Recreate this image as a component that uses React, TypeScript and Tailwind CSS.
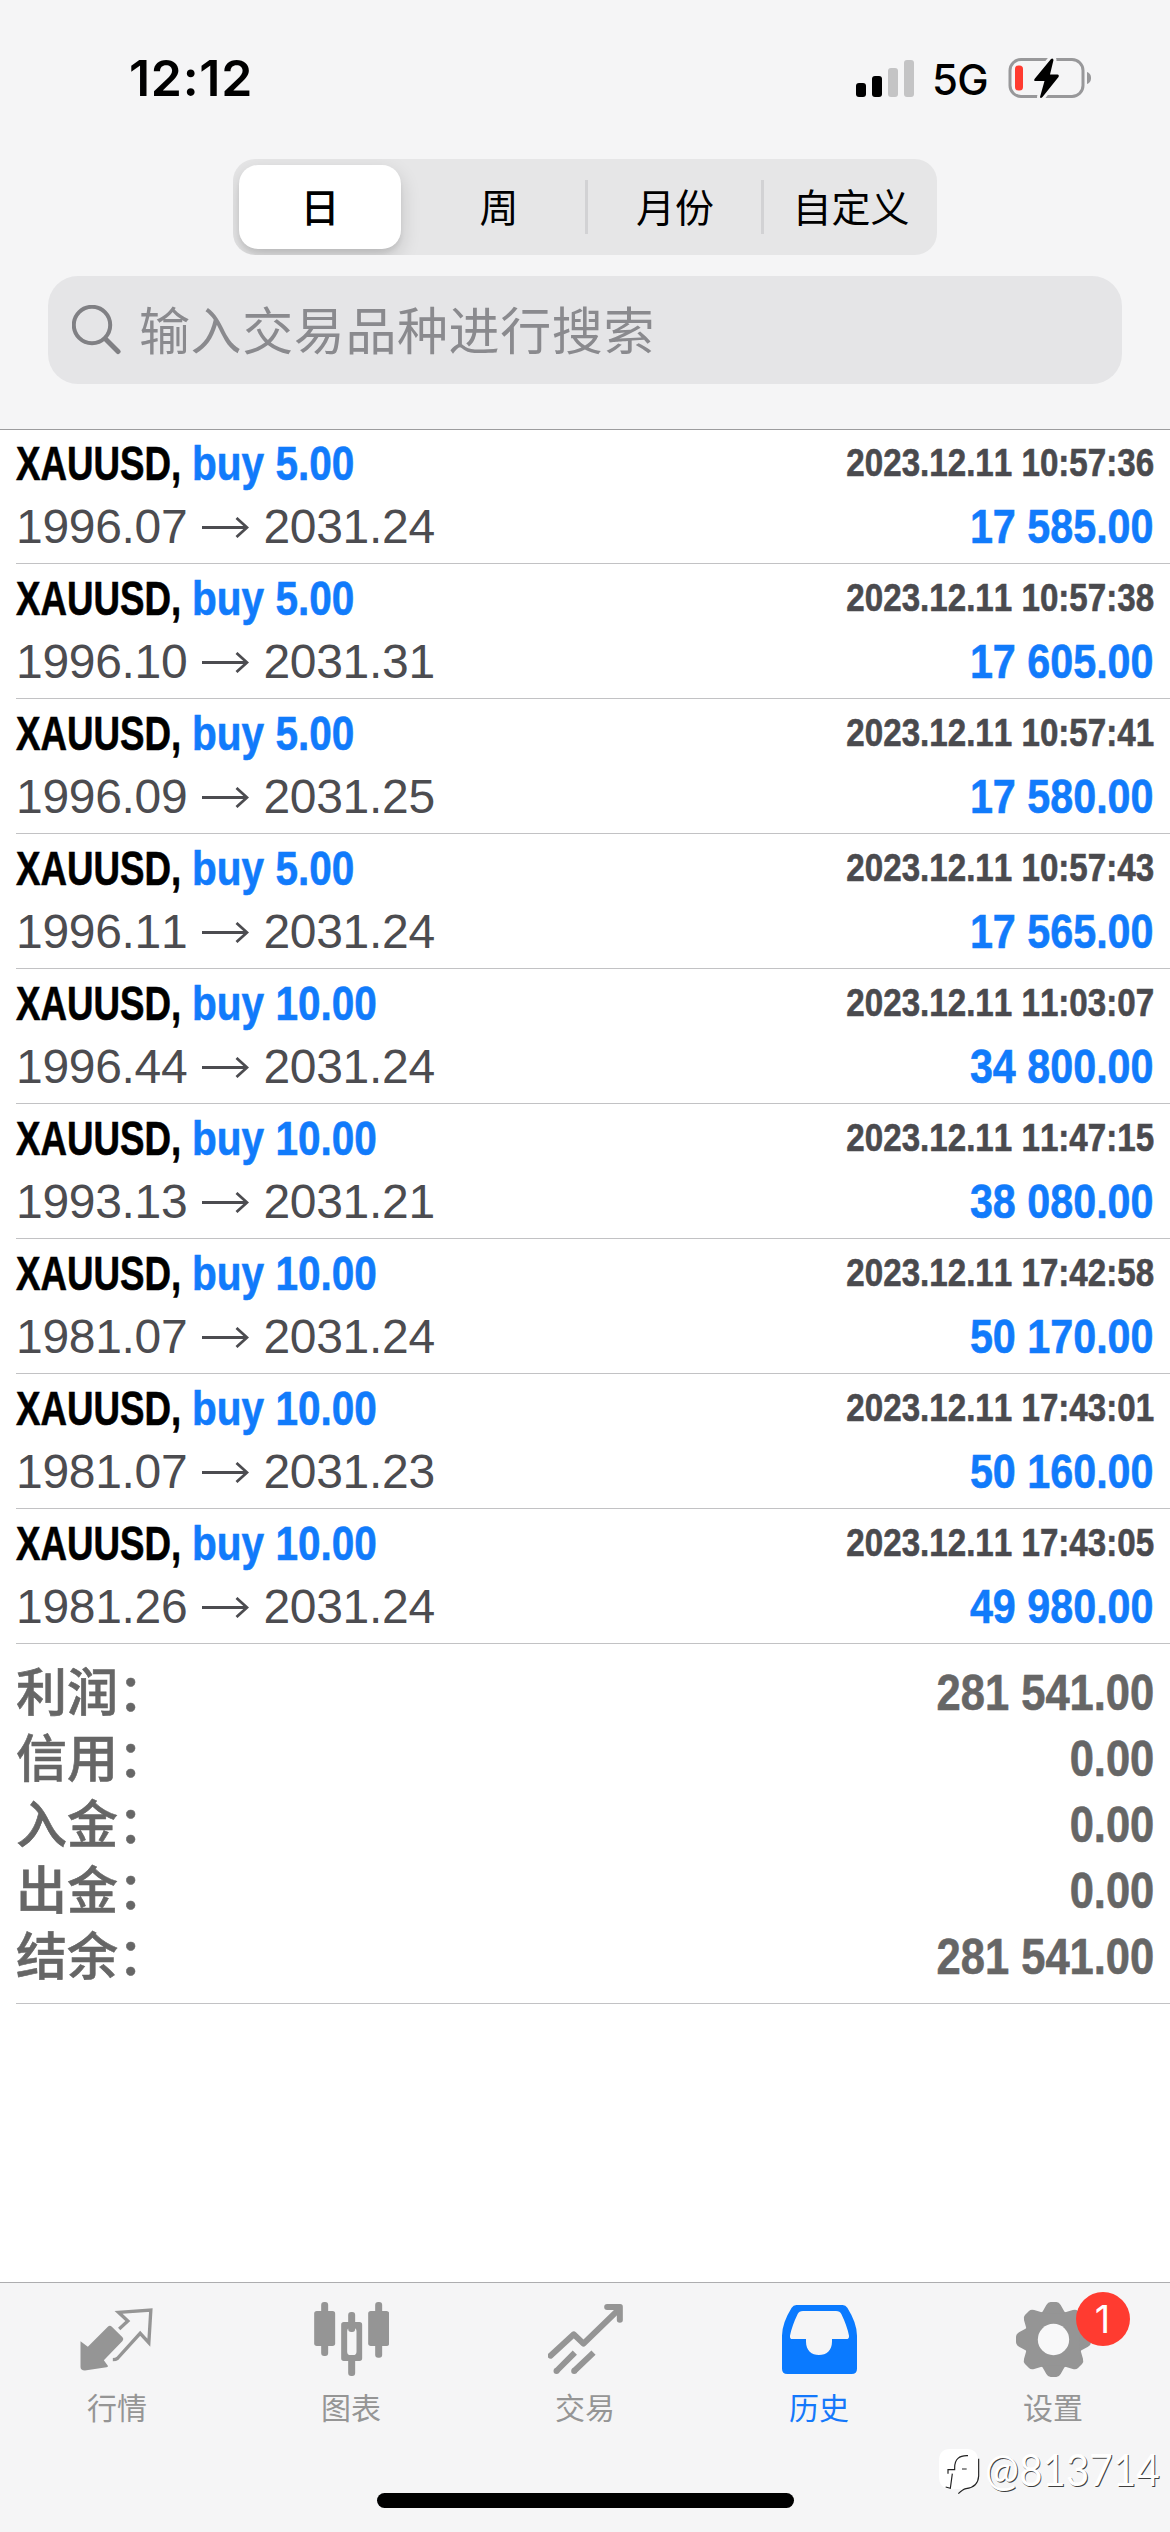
import type { ReactNode } from "react";
import clsx from "clsx";

type Deal = {
  volume: string;
  open: string;
  close: string;
  time: string;
  profit: string;
};

const PERIODS = ["日", "周", "月份", "自定义"];

const DEALS: Deal[] = [
  { volume: "5.00", open: "1996.07", close: "2031.24", time: "2023.12.11 10:57:36", profit: "17 585.00" },
  { volume: "5.00", open: "1996.10", close: "2031.31", time: "2023.12.11 10:57:38", profit: "17 605.00" },
  { volume: "5.00", open: "1996.09", close: "2031.25", time: "2023.12.11 10:57:41", profit: "17 580.00" },
  { volume: "5.00", open: "1996.11", close: "2031.24", time: "2023.12.11 10:57:43", profit: "17 565.00" },
  { volume: "10.00", open: "1996.44", close: "2031.24", time: "2023.12.11 11:03:07", profit: "34 800.00" },
  { volume: "10.00", open: "1993.13", close: "2031.21", time: "2023.12.11 11:47:15", profit: "38 080.00" },
  { volume: "10.00", open: "1981.07", close: "2031.24", time: "2023.12.11 17:42:58", profit: "50 170.00" },
  { volume: "10.00", open: "1981.07", close: "2031.23", time: "2023.12.11 17:43:01", profit: "50 160.00" },
  { volume: "10.00", open: "1981.26", close: "2031.24", time: "2023.12.11 17:43:05", profit: "49 980.00" },
];

const TOTALS = [
  { label: "利润：", value: "281 541.00" },
  { label: "信用：", value: "0.00" },
  { label: "入金：", value: "0.00" },
  { label: "出金：", value: "0.00" },
  { label: "结余：", value: "281 541.00" },
];

function StatusBar() {
  return (
    <div className="flex h-[156px] items-center justify-between pl-[129px] pr-[78px]">
      <span className="font-['Inter',sans-serif] text-[50px] font-semibold tracking-[0.7px] text-black">
        12:12
      </span>
      <div className="flex items-center">
        <svg width="58" height="37" viewBox="0 0 58 37">
          <rect x="0" y="23" width="10" height="14" rx="3" fill="#000" />
          <rect x="16" y="16" width="10" height="21" rx="3" fill="#000" />
          <rect x="32" y="8" width="10" height="29" rx="3" fill="#c4c4c5" />
          <rect x="48" y="0" width="10" height="37" rx="3" fill="#c4c4c5" />
        </svg>
        <span className="ml-[18px] w-[60px] pt-0.5 font-['Inter',sans-serif] text-[42px] font-medium tracking-[-0.8px] text-black">
          5G
        </span>
        <svg className="ml-[16px]" width="84" height="42" viewBox="0 0 84 42">
          <rect x="2" y="2.5" width="73" height="37" rx="11" fill="none" stroke="#98989a" strokeWidth="3" />
          <path d="M79 15c3.5 1.200 4 4 4 6s-.5 4.800-4 6z" fill="#98989a" />
          <rect x="7" y="8.500" width="8" height="25" rx="3.500" fill="#ff3b30" />
          <path
            d="M43 2 26.500 22q-1 2 1 2h9l-4.500 16q.5 2 2.500 0L50.500 20q1-2-1-2.500h-7.500L45.500 3q-.5-2.500-2.500-1z"
            fill="#000"
            stroke="#f5f5f6"
            strokeWidth="6"
            strokeLinejoin="round"
            paintOrder="stroke"
          />
        </svg>
      </div>
    </div>
  );
}

function PeriodControl({ active }: { active: number }) {
  return (
    <div className="mx-auto mt-[3px] flex h-24 w-[704px] overflow-hidden rounded-[22px] bg-[#e6e6e7]">
      {PERIODS.map((label, i) => (
        <div key={label} className="flex w-44 items-center">
          <div className={clsx("h-[54px] w-[3px]", i > active + 1 && "bg-[#d2d2d4]")} />
          <div
            className={clsx(
              "flex h-[84px] w-[162px] items-center justify-center rounded-[19px] pb-1 text-[39px] text-black",
              i === active
                ? "ml-[3px] bg-white font-medium shadow-[0_8px_20px_rgba(0,0,0,0.16),0_4px_4px_rgba(0,0,0,0.06)]"
                : "ml-[6px]",
            )}
          >
            {label}
          </div>
        </div>
      ))}
    </div>
  );
}

function SearchField() {
  return (
    <div className="mx-12 mt-[21px] flex h-[108px] items-center rounded-[30px] bg-[#e5e5e7] pl-6 text-[#8a8a8e]">
      <svg width="50" height="50" viewBox="0 0 50 50" fill="none" stroke="#808084" strokeLinecap="round">
        <circle cx="20" cy="20" r="18.200" strokeWidth="4" />
        <path d="M33.500 34 46 46.500" strokeWidth="5" />
      </svg>
      <span className="ml-[17px] pb-1 text-[51px] tracking-[0.6px]">输入交易品种进行搜索</span>
    </div>
  );
}

function Arrow() {
  return (
    <svg
      className="ml-[15px] mr-[14px] mt-[2px]"
      width="47"
      height="21"
      viewBox="0 0 47 21"
      fill="none"
      stroke="#4c4c50"
      strokeWidth="2.800"
    >
      <path d="M0 10.500h44M34.500 1l10.500 9.500L34.500 20" />
    </svg>
  );
}

// Condensed bold face: the glyphs are squeezed horizontally around one edge.
function Condensed({ children, className }: { children: ReactNode; className: string }) {
  return (
    <span
      className={clsx(
        "inline-block whitespace-pre font-bold [-webkit-text-stroke:0.6px] [font-kerning:none]",
        className,
      )}
    >
      {children}
    </span>
  );
}

function DealRow({ deal }: { deal: Deal }) {
  return (
    <div className="ml-4 h-[135px] border-b border-[#c2c2c4] pr-4 pt-[3px] font-['Liberation_Sans',sans-serif] text-[48px]">
      <div className="flex h-[63px] items-center justify-between">
        <div className="flex">
          <div className="w-[176px]">
            <Condensed className="origin-left scale-x-[0.765] text-black">XAUUSD,</Condensed>
          </div>
          <Condensed className="origin-left scale-x-[0.845] text-[#117bfb]">{`buy ${deal.volume}`}</Condensed>
        </div>
        <Condensed className="origin-right scale-x-[0.85] text-[39px] text-[#4a4a4e]">{deal.time}</Condensed>
      </div>
      <div className="flex h-[63px] items-center justify-between">
        <div className="flex items-center tracking-[-0.3px] text-[#4c4c50] [font-kerning:none]">
          <span>{deal.open}</span>
          <Arrow />
          <span>{deal.close}</span>
        </div>
        <Condensed className="origin-right scale-x-[0.86] text-[#117bfb]">{deal.profit}</Condensed>
      </div>
    </div>
  );
}

function Totals() {
  return (
    <div className="ml-4 h-[360px] border-b border-[#c2c2c4] pr-4 pt-[15px] text-[#666]">
      {TOTALS.map((row) => (
        <div key={row.label} className="flex h-[66px] items-center justify-between">
          <span className="pb-1.5 text-[51px] font-medium leading-[60px] [-webkit-text-stroke:0.6px]">
            {row.label}
          </span>
          <Condensed className="origin-right scale-x-[0.87] pt-0.5 font-['Liberation_Sans',sans-serif] text-[50px] leading-[60px]">
            {row.value}
          </Condensed>
        </div>
      ))}
    </div>
  );
}

function QuotesIcon() {
  return (
    <svg width="75" height="75" viewBox="238.5 126 225 225">
      <path
        d="M240 244l22 16 60-60q6-5 12 0l32 32q5 5 0 11l-56 58 12 16q2 4-4 5l-60 9q-18 2-18-10z"
        fill="#959595"
      />
      <path
        d="M356 207l26-24-28-26 97-7-6 98-26-28-68 75q-5 4-14 4"
        fill="none"
        stroke="#959595"
        strokeWidth="10"
      />
    </svg>
  );
}

function ChartIcon() {
  return (
    <svg width="75" height="75" viewBox="938.5 126 225 225" fill="#959595">
      <rect x="960" y="126" width="21" height="162" rx="9" />
      <rect x="939" y="153" width="63" height="105" rx="8" />
      <rect x="1041" y="156" width="21" height="60" rx="9" />
      <rect x="1041" y="290" width="21" height="58" rx="9" />
      <path
        fillRule="evenodd"
        d="M1028 186h47q8 0 8 8v101q0 8-8 8h-47q-8 0-8-8V194q0-8 8-8zM1048 204q-10 0-10 10v61q0 10 10 10h8q10 0 10-10v-61q0-10-10-10z"
      />
      <rect x="1122" y="126" width="21" height="167" rx="9" />
      <rect x="1101" y="153" width="63" height="105" rx="8" />
    </svg>
  );
}

function TradeIcon() {
  return (
    <svg width="75" height="75" viewBox="261.5 126 225 225" fill="none" stroke="#959595" strokeWidth="18">
      <path d="M269 287l70-64 29 28L474 148" strokeLinecap="round" strokeLinejoin="round" />
      <path d="M439 132h39q8 0 8 8v40q0 8-9 8t-9-8v-30h-29q-9 0-9-9t9-9z" fill="#959595" stroke="none" />
      <path d="M287 333l55-55M340 333l58-55" />
      <path d="M287 333h.1M340 333h.1" strokeLinecap="round" />
    </svg>
  );
}

function HistoryIcon() {
  return (
    <svg width="75" height="75" viewBox="963 126 225 225">
      <path
        fillRule="evenodd"
        d="M1006 135h139q9 0 14 8 29 46 29 84v99q0 16-16 16H979q-16 0-16-16v-99q0-38 29-84 5-8 14-8zM1026 153q-12 0-16 9-17 35-23 65-1 10 7 10h41v8c0 26 17 40 39 40s39-14 39-40v-8h43q9 0 8-10-6-30-23-65-4-9-16-9z"
        fill="#0a7aff"
      />
    </svg>
  );
}

function SettingsIcon() {
  return (
    <svg width="75" height="75" viewBox="345 126 225 225">
      <g fill="#959595">
        <circle cx="457.500" cy="238.500" r="89" />
        {[0, 45, 90, 135, 180, 225, 270, 315].map((deg) => (
          <path
            key={deg}
            transform={`rotate(${deg} 457.5 238.500)`}
            d="M422 160l14-25q5-9 13-9h17q8 0 13 9l14 25z"
          />
        ))}
      </g>
      <circle cx="457.500" cy="238.500" r="47" fill="#f8f8f9" />
    </svg>
  );
}

const TABS = [
  { label: "行情", icon: <QuotesIcon /> },
  { label: "图表", icon: <ChartIcon /> },
  { label: "交易", icon: <TradeIcon /> },
  { label: "历史", icon: <HistoryIcon />, active: true },
  { label: "设置", icon: <SettingsIcon />, badge: 1 },
];

function TabBar() {
  return (
    <nav className="mt-auto h-[250px] border-t border-[#adadaf] bg-[#f5f5f6]">
      <div className="flex h-[210px] pt-[19px]">
        {TABS.map((tab) => (
          <div key={tab.label} className="flex flex-1 flex-col items-center">
            <div className="relative">
              {tab.icon}
              {tab.badge && (
                <span className="absolute -top-[10px] left-[60px] flex size-[54px] items-center justify-center rounded-full bg-[#ff3b30] font-['Inter',sans-serif] text-[38px] text-white">
                  {tab.badge}
                </span>
              )}
            </div>
            <span
              className={clsx(
                "mt-[14px] text-[30px] leading-[30px]",
                tab.active ? "text-[#1478fb]" : "text-[#959595]",
              )}
            >
              {tab.label}
            </span>
          </div>
        ))}
      </div>
      <div className="mx-auto h-[15px] w-[417px] rounded-full bg-black" />
    </nav>
  );
}

function Watermark() {
  return (
    <div className="absolute left-[938px] top-[2448px] flex w-[224px] items-start">
      <svg className="shrink-0" width="42" height="48" viewBox="0 0 126 144">
        <path
          d="M36 3h50q34 0 34 36v46q0 34-36 38-10 2-26 17l12-17H36Q3 120 3 86V39Q3 3 36 3z"
          fill="#fff"
        />
        <path
          d="M122 32v52q-2 34-38 38-10 2-23 15M90 23q-40-2-40 36v6H30v12M43 77l-6 44-14-4M72 63h14"
          fill="none"
          stroke="#222"
          strokeWidth="3.500"
        />
      </svg>
      <span className="ml-[5px] origin-left scale-x-[0.9] font-['Lato',sans-serif] text-[45px] leading-[42px] text-white [text-shadow:1px_1px_0_rgba(0,0,0,0.75)]">
        @813714
      </span>
    </div>
  );
}

export default function App() {
  return (
    <div className="relative flex h-[2532px] w-[1170px] flex-col overflow-hidden bg-white font-['Noto_Sans_CJK_SC',sans-serif]">
      <header className="h-[430px] shrink-0 border-b border-[#9c9c9e] bg-[#f5f5f6]">
        <StatusBar />
        <PeriodControl active={0} />
        <SearchField />
      </header>
      <main className="-mt-px">
        {DEALS.map((deal) => (
          <DealRow key={deal.time} deal={deal} />
        ))}
        <Totals />
      </main>
      <TabBar />
      <Watermark />
    </div>
  );
}
